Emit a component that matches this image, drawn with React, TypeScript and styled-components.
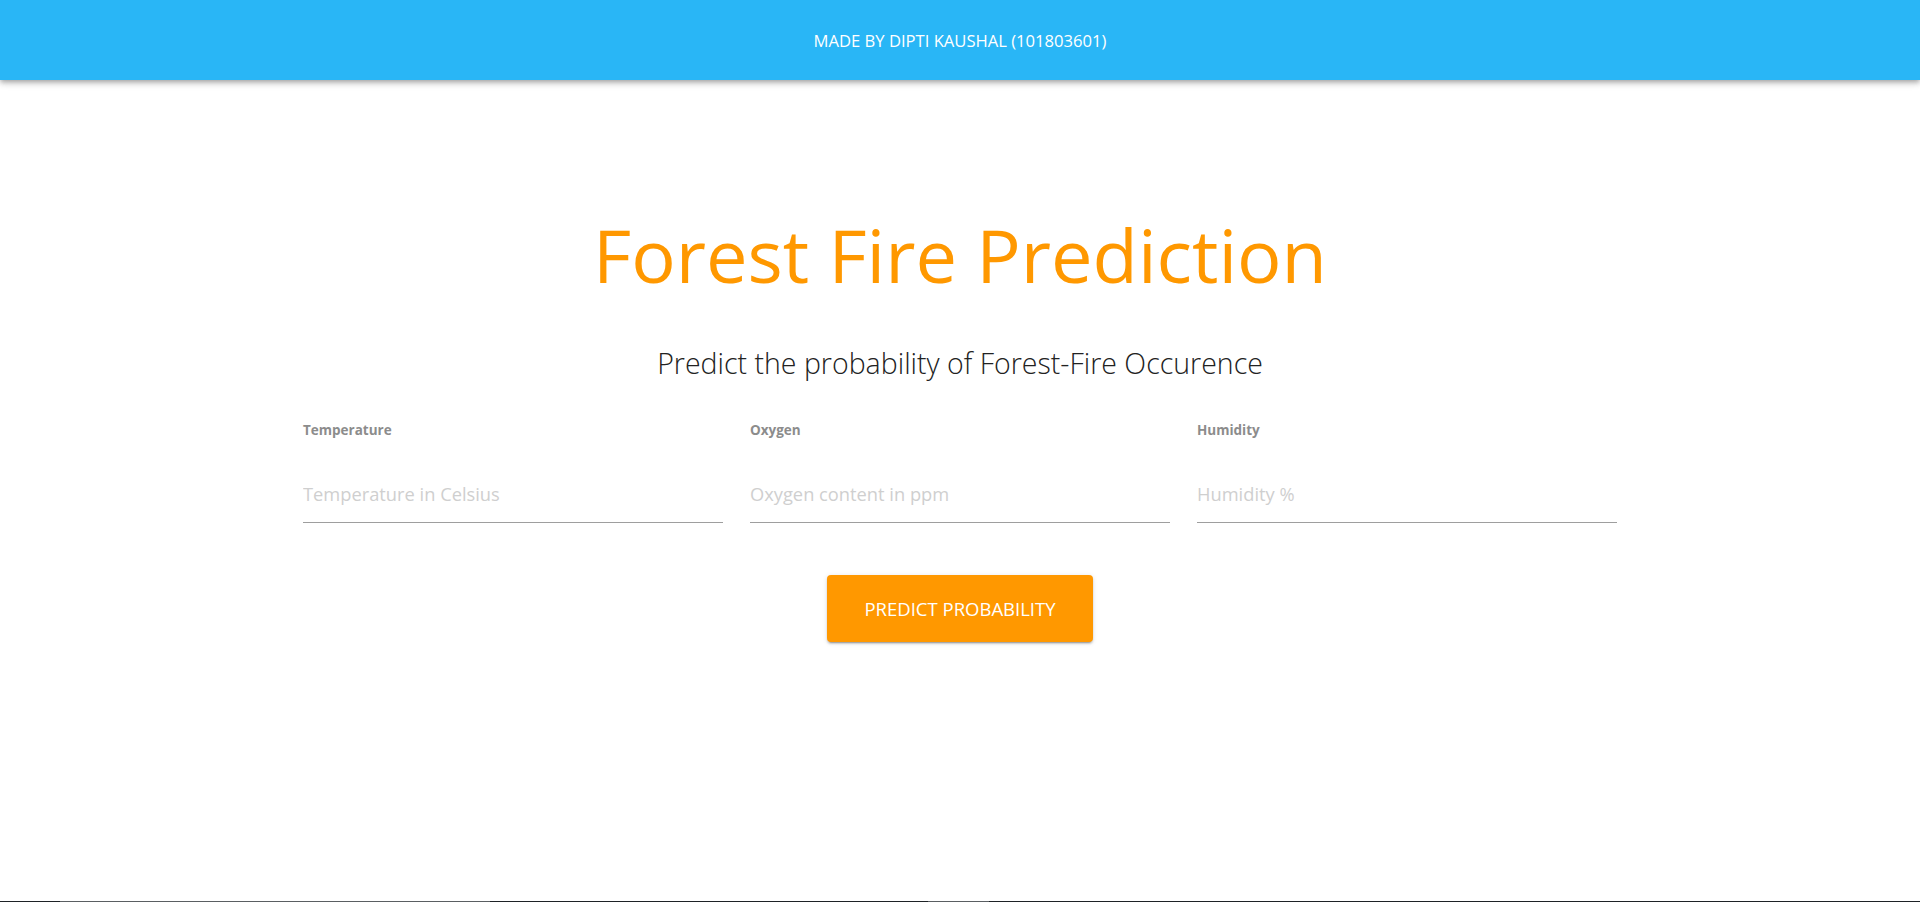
import React from "react";
import styled, { createGlobalStyle } from "styled-components";

const GlobalStyle = createGlobalStyle`
  html, body {
    margin: 0;
    padding: 0;
    background: #ffffff;
    font-family: "Open Sans", "Noto Sans", Arial, sans-serif;
  }
  * { box-sizing: border-box; }
`;

const Page = styled.div`
  min-height: 902px;
  display: flex;
  flex-direction: column;
`;

const Header = styled.header`
  height: 80px;
  background: #29b6f6;
  color: #ffffff;
  display: flex;
  align-items: center;
  justify-content: center;
  box-shadow: 0 2px 4px -1px rgba(0, 0, 0, 0.2), 0 4px 5px 0 rgba(0, 0, 0, 0.14),
    0 1px 10px 0 rgba(0, 0, 0, 0.12);
`;

const HeaderText = styled.div`
  font-size: 16.6px;
  font-weight: 400;
  letter-spacing: 0;
  text-transform: uppercase;
`;

const Main = styled.main`
  display: flex;
  flex-direction: column;
  align-items: center;
  padding-top: 130px;
`;

const Title = styled.h1`
  margin: 0;
  font-size: 74px;
  font-weight: 400;
  line-height: 90px;
  color: #ff9800;
  letter-spacing: 0;
`;

const Subtitle = styled.h2`
  margin: 45px 0 0;
  font-size: 28.5px;
  font-weight: 300;
  line-height: 36px;
  color: #222222;
  letter-spacing: 0;
`;

const FieldRow = styled.div`
  margin-top: 40px;
  display: grid;
  grid-template-columns: repeat(3, 420px);
  column-gap: 27px;
`;

const Field = styled.label`
  display: flex;
  flex-direction: column;
`;

const FieldLabel = styled.span`
  font-size: 13.5px;
  font-weight: 700;
  color: #8c8c8c;
  line-height: 18px;
`;

const Input = styled.input`
  margin-top: 42px;
  border: none;
  border-bottom: 1px solid #9e9e9e;
  outline: none;
  padding: 0 0 15px;
  font-family: inherit;
  font-size: 18.3px;
  line-height: 26px;
  color: #333333;
  background: transparent;
  &::placeholder {
    color: #cfcfcf;
  }
`;

const PredictButton = styled.button`
  margin-top: 52px;
  width: 266px;
  height: 67px;
  border: none;
  border-radius: 4px;
  background: #ff9800;
  color: #ffffff;
  font-family: inherit;
  font-size: 18.5px;
  font-weight: 400;
  text-transform: uppercase;
  letter-spacing: 0;
  cursor: pointer;
  box-shadow: 0 3px 1px -2px rgba(0, 0, 0, 0.2), 0 2px 2px 0 rgba(0, 0, 0, 0.14),
    0 1px 5px 0 rgba(0, 0, 0, 0.12);
`;

const BottomEdge = styled.div`
  position: fixed;
  left: 0;
  right: 0;
  bottom: 0;
  height: 1px;
  background: linear-gradient(
    to right,
    #1e2226 0 60px,
    #5a5e62 60px 490px,
    #1e2226 490px 928px,
    #5a5e62 928px 989px,
    #1e2226 989px
  );
`;

const fields = [
  { label: "Temperature", placeholder: "Temperature in Celsius" },
  { label: "Oxygen", placeholder: "Oxygen content in ppm" },
  { label: "Humidity", placeholder: "Humidity %" },
];

export default function App() {
  return (
    <Page>
      <GlobalStyle />
      <Header>
        <HeaderText>Made by Dipti Kaushal (101803601)</HeaderText>
      </Header>
      <Main>
        <Title>Forest Fire Prediction</Title>
        <Subtitle>Predict the probability of Forest-Fire Occurence</Subtitle>
        <FieldRow>
          {fields.map((f) => (
            <Field key={f.label}>
              <FieldLabel>{f.label}</FieldLabel>
              <Input placeholder={f.placeholder} />
            </Field>
          ))}
        </FieldRow>
        <PredictButton>Predict Probability</PredictButton>
      </Main>
      <BottomEdge />
    </Page>
  );
}
